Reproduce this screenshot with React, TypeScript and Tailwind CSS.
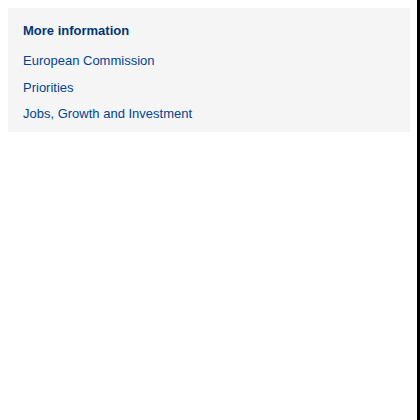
const links = ['European Commission', 'Priorities', 'Jobs, Growth and Investment']

export default function App() {
  return (
    <div className="flex h-[420px] w-[420px] bg-white font-['Liberation_Sans',Arial,sans-serif]">
      <div className="flex-1 pl-2 pr-[7px] pt-2">
        <div className="bg-[#f5f5f5] px-[15px] pt-[10px] pb-[4px]">
          <h2 className="text-[13px] font-bold leading-[26px] text-[#003776]">More information</h2>
          <ul className="mt-[4px] flex flex-col">
            {links.map((l) => (
              <li key={l} className="text-[13px] leading-[26.5px] text-[#004494]">
                <a href="#">{l}</a>
              </li>
            ))}
          </ul>
        </div>
      </div>
      <div className="w-[3px] bg-black" />
    </div>
  )
}
